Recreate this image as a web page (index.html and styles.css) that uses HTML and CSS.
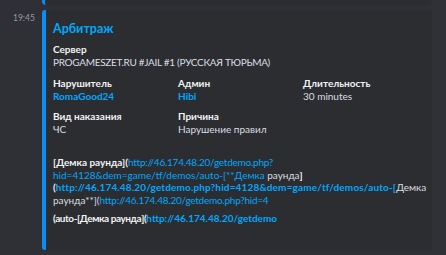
FILE: index.html
```html
<!DOCTYPE html>
<html lang="ru">
<head>
  <meta charset="UTF-8">
  <title>Арбитраж</title>
  <link rel="stylesheet" href="styles.css">
</head>
<body>
  <div class="chat">
    <div class="prev-embed"></div>

    <div class="message">
      <div class="timestamp">19:45</div>
      <div class="embed">
        <div class="embed-title">Арбитраж</div>

        <div class="field field-full">
          <div class="field-name">Сервер</div>
          <div class="field-value caps">PROGAMESZET.RU #JAIL #1 (РУССКАЯ ТЮРЬМА)</div>
        </div>

        <div class="fields">
          <div class="field">
            <div class="field-name">Нарушитель</div>
            <div class="field-value link bold">RomaGood24</div>
          </div>
          <div class="field">
            <div class="field-name">Админ</div>
            <div class="field-value link bold">Hibi</div>
          </div>
          <div class="field">
            <div class="field-name">Длительность</div>
            <div class="field-value">30 minutes</div>
          </div>
          <div class="field">
            <div class="field-name">Вид наказания</div>
            <div class="field-value">ЧС</div>
          </div>
          <div class="field">
            <div class="field-name">Причина</div>
            <div class="field-value">Нарушение правил</div>
          </div>
        </div>

        <div class="embed-text">
          <p>
            <b>[Демка раунда](</b><span class="link url">http://46.174.48.20/getdemo.php?</span><br>
            <span class="link">hid=4128&amp;dem=game/tf/demos/auto-[**Демка </span>раунда<b>]</b><br>
            <b>(</b><b class="link wide">http://46.174.48.20/getdemo.php?hid=4128&amp;dem=game/tf/demos/auto-[</b>Демка<br>
            раунда**](<span class="link url">http://46.174.48.20/getdemo.php?hid=4</span>
          </p>
          <p>
            <b class="tight">(auto-[Демка раунда](</b><b class="link">http://46.174.48.20/getdemo</b>
          </p>
        </div>
      </div>
    </div>
  </div>
  <div class="scroll-track"></div>
</body>
</html>
```

FILE: styles.css
```css
* {
  box-sizing: border-box;
}
body {
  margin: 0;
  display: flex;
  height: 255px;
  overflow: hidden;
  background-color: #2e3035;
  font-family: Lato, "Noto Sans", sans-serif;
  color: #dbdee1;
}
.chat {
  width: 432px;
}
.scroll-track {
  flex: 1;
  background-color: #2f3136;
}
.prev-embed {
  margin-left: 42px;
  width: 390px;
  height: 5px;
  background-color: #2b2d31;
  border-left: 3px solid #0b8df6;
  border-radius: 0 0 4px 4px;
}
.message {
  display: flex;
  margin-top: 5px;
}
.timestamp {
  width: 42px;
  padding: 3px 0 0 13px;
  font-size: 8.5px;
  line-height: 10px;
  color: #949ba4;
}
.embed {
  width: 390px;
  height: 240px;
  background-color: #2b2d31;
  border-left: 4px solid #0b8df6;
  border-radius: 3px;
  padding: 10px 12px 0 7px;
}
.embed-title {
  font-size: 12.5px;
  line-height: 18px;
  font-weight: bold;
  color: #00a8fc;
}
.field-full {
  margin-top: 5px;
}
.field-name {
  font-size: 10px;
  line-height: 13px;
  font-weight: bold;
  color: #f2f3f5;
}
.field-value {
  font-size: 10px;
  line-height: 13px;
}
.caps {
  letter-spacing: -0.3px;
}
.fields {
  display: grid;
  grid-template-columns: repeat(3, 117px);
  column-gap: 8px;
  row-gap: 7px;
  margin-top: 8px;
}
.link {
  color: #00a8fc;
}
.bold {
  font-weight: bold;
}
.embed-text {
  margin-top: 20px;
  font-size: 10px;
  line-height: 12.5px;
}
.embed-text p {
  margin: 0 0 6px;
  white-space: nowrap;
}
.embed-text b {
  color: #f2f3f5;
}
.embed-text b.link {
  color: #00a8fc;
}
.url {
  letter-spacing: -0.25px;
}
.wide {
  letter-spacing: 0.15px;
}
.tight {
  letter-spacing: -0.4px;
}
```
